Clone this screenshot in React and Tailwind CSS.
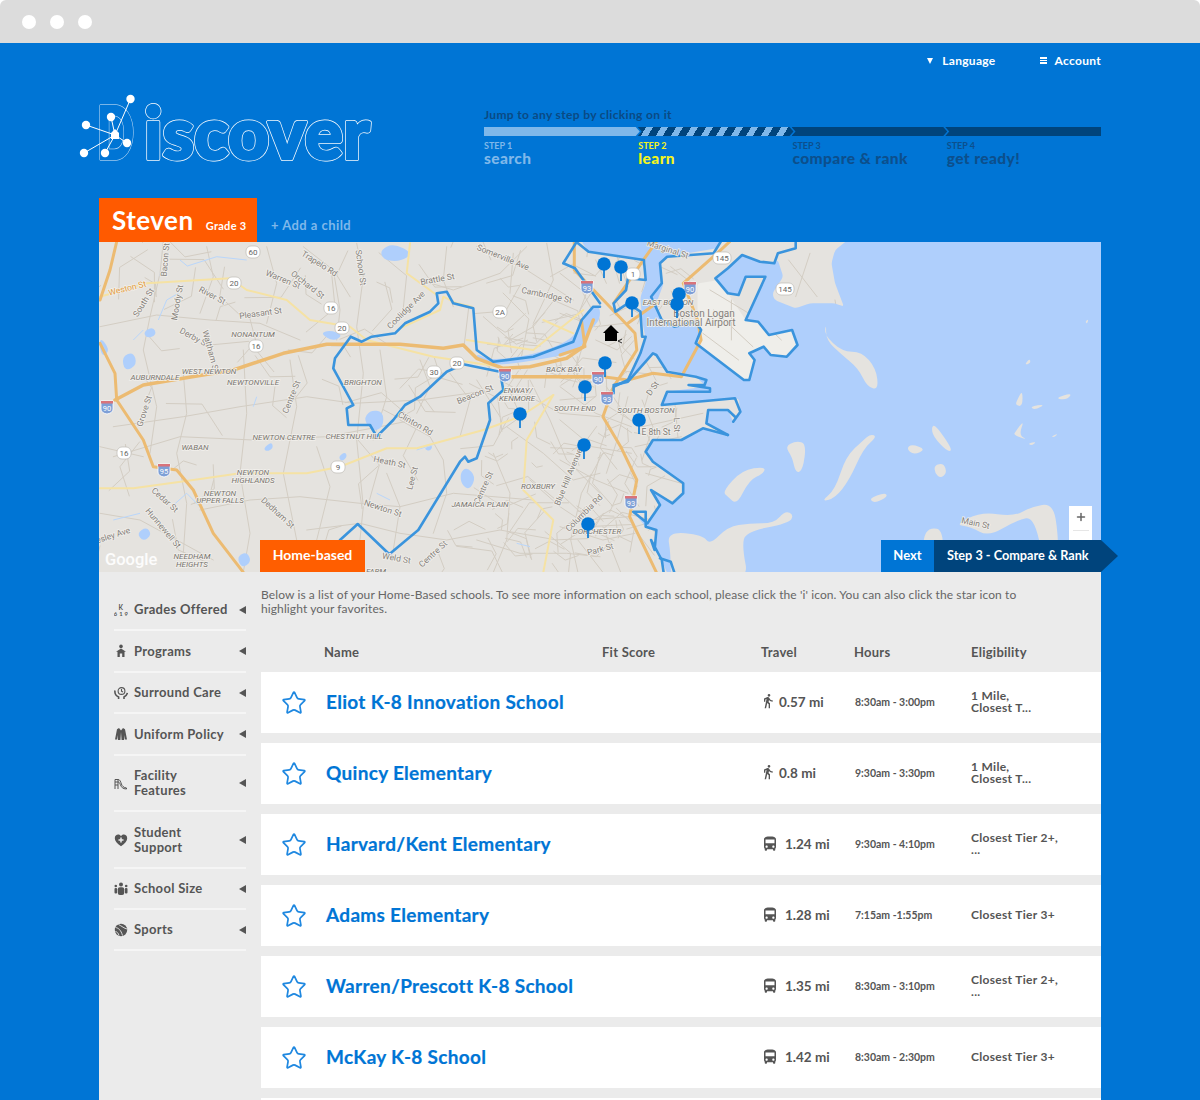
import React from 'react';
import { Star, Plus } from 'lucide-react';
import { MdDirectionsWalk, MdDirectionsBus } from 'react-icons/md';

// zoom-crop coordinates -> page coordinates, the svg viewBox is in page px
const parse = (s, ox, sx, sy) => s.trim().split(/\s+/).map((p) => { const [x, y] = p.split(',').map(Number); return [ox + x / sx, 240 + y / sy]; });
const str = (pts) => pts.map(([x, y]) => `${x.toFixed(1)},${y.toFixed(1)}`).join(' ');
const z3 = (s) => str(parse(s, 100, 3, 3));
const z4 = (s) => str(parse(s, 560, 2.8, 3));

// island outlines: quadratic through midpoints, gives the soft map blobs
const blob = (s, conv = (t) => parse(t, 560, 2.8, 3)) => {
  const p = conv(s);
  const mid = (a, b) => [(a[0] + b[0]) / 2, (a[1] + b[1]) / 2];
  const start = mid(p[p.length - 1], p[0]);
  let d = `M${start[0].toFixed(1)} ${start[1].toFixed(1)}`;
  p.forEach((pt, i) => {
    const m = mid(pt, p[(i + 1) % p.length]);
    d += `Q${pt[0].toFixed(1)} ${pt[1].toFixed(1)} ${m[0].toFixed(1)} ${m[1].toFixed(1)}`;
  });
  return d + 'Z';
};

// coast: keep the corners, only round them off a little
const rounded = (s, r = 3) => {
  const p = parse(s, 560, 2.8, 3);
  const toward = (a, b) => {
    const len = Math.hypot(b[0] - a[0], b[1] - a[1]) || 1;
    const t = Math.min(r, len / 2) / len;
    return [a[0] + (b[0] - a[0]) * t, a[1] + (b[1] - a[1]) * t];
  };
  let d = '';
  p.forEach((pt, i) => {
    const a = toward(pt, p[(i - 1 + p.length) % p.length]);
    const b = toward(pt, p[(i + 1) % p.length]);
    d += `${i ? 'L' : 'M'}${a[0].toFixed(1)} ${a[1].toFixed(1)}Q${pt[0].toFixed(1)} ${pt[1].toFixed(1)} ${b[0].toFixed(1)} ${b[1].toFixed(1)}`;
  });
  return d + 'Z';
};

const BAY = '800,5 770,30 760,70 770,130 795,200 770,190 700,190 660,205 600,180 595,160 625,110 610,60 600,70 560,65 510,45 470,85 435,115 470,160 500,165 520,110 575,110 520,240 555,245 585,285 650,270 665,315 635,350 590,345 570,320 530,340 545,360 530,420 515,420 385,310 395,270 380,245 300,255 285,240 270,190 290,130 280,70 300,50 440,25 450,5 60,5 80,35 140,42 240,62 240,130 225,170 230,240 240,300 190,420 150,440 190,430 260,340 300,390 380,410 410,440 300,455 285,495 500,475 505,510 485,545 470,510 415,510 410,550 470,585 400,565 340,600 260,600 240,635 260,665 345,730 345,760 315,790 255,750 280,795 245,850 205,815 240,860 270,870 265,930 285,960 300,1000 1520,1000 1520,0 800,0';

const ISLANDS = [
  '300,875 400,885 420,915 470,860 530,850 600,850 630,812 655,825 640,850 520,875 510,920 530,1030 310,1030 310,940',
  '745,250 740,285 790,335 845,335 885,385 892,450 860,440 835,385 790,345 745,300',
  '630,620 660,603 690,610 680,690 660,700 650,650',
  '730,785 770,750 800,650 850,600 870,582 888,590 850,625 810,720 770,775',
  '455,755 510,690 575,680 570,700 530,720 495,795 470,770',
  '1040,560 1052,555 1100,630 1085,635 1045,590',
  '970,625 985,612 1025,628 990,645',
  '1048,675 1075,670 1083,700 1065,715 1050,700',
  '865,775 910,758 918,770 880,790',
  '1280,480 1295,450 1295,500 1275,495',
  '1315,500 1360,492 1330,510',
  '1385,475 1435,458 1420,480',
  '1275,575 1300,540 1285,585 1310,600 1270,585',
  '1310,610 1335,605 1320,617',
  '1375,590 1395,580 1385,592',
  '1105,855 1180,815 1270,830 1320,800 1380,790 1395,880 1395,1010 1360,1010 1330,830 1280,840 1200,890 1150,860',
  '1015,895 1035,862 1075,870 1070,1010 1015,1010',
  '1470,245 1480,236 1476,252',
  '1300,375 1315,355 1318,370',
];

const z3p = (t) => parse(t, 100, 3, 3);
const PONDS = [
  '840,30 880,10 940,40 900,65 850,60',
  '790,540 810,510 850,515 850,560 820,575',
  '1080,700 1100,680 1128,710 1110,750 1085,735',
  '490,625 515,605 520,625 500,635',
  '715,650 735,635 742,650 725,665',
  '110,880 140,860 155,885 130,905',
  '410,950 440,935 455,965 425,985',
  '65,350 100,335 112,375 75,395',
  '130,275 160,260 170,285 140,295',
  '660,280 690,270 730,285 700,305',
  '970,625 1000,615 990,635',
  '1130,340 1170,362 1300,345 1420,298 1440,245 1470,205 1500,198 1500,240 1470,270 1440,335 1300,362 1180,378 1130,358',
  '0,290 30,330 10,350 0,330',
];
const STREAMS = [
  '240,60 262,78 350,50 440,60', '175,240 200,180 235,160', '100,300 130,270', '215,800 260,760 300,800', '40,840 120,820',
  '830,760 870,780', '950,630 1010,610', '640,900 660,960', '470,470 460,500', '1250,910 1290,920',
];

const MINOR3 = [
  '190,5 180,100 150,230 130,330 170,500 150,640', '0,260 170,225 330,240 480,250 600,300', '610,20 700,90 720,210 710,300',
  '770,10 790,110 770,260 790,400 770,600 790,800 770,997', '1130,20 1280,90 1420,180', '960,120 1060,150 1200,100 1280,20',
  '250,400 260,520 230,640 260,790 250,940', '430,330 440,520 420,700 450,880 430,997', '570,360 590,500 550,700 590,900 560,997',
  '40,560 250,530 420,500 620,470 760,490 960,480 1180,450', '40,650 240,590 460,600 680,590 840,560 940,540', '300,810 450,780 600,770 780,790 900,800 1060,760 1300,780',
  '620,870 780,850 900,880 1040,900 1200,870 1370,900', '900,540 990,590 1030,660 1040,760 1000,880', '1180,640 1230,760 1220,900 1180,997',
  '1040,20 1030,120 1060,200', '1150,230 1230,300 1300,260 1370,170', '1200,420 1290,470 1380,520 1500,530', '1290,420 1350,540 1400,660 1500,760',
  '1220,560 1330,640 1420,720 1500,700', '1290,720 1380,800 1500,880', '1130,900 1260,940 1400,940 1500,950', '860,700 900,800 880,930', '650,620 690,740 650,900',
  '0,620 130,650', '0,820 120,840 230,900 340,960', '500,20 530,130 500,250', '320,20 340,110 300,220', '840,330 860,470 820,600', '960,360 990,440 950,520',
  '1050,400 1110,480 1080,590', '1130,420 1200,530', '1340,10 1360,120 1300,250', '1240,40 1230,160', '1400,380 1440,420 1500,430',
];

const MINOR4 = [
  '0,100 60,150 100,230 30,300', '0,220 100,260 180,250', '0,440 100,520 200,560', '0,540 90,620 200,640', '0,660 100,720 190,760', '0,760 80,840 190,830', '0,860 120,900 210,880',
  '120,640 60,760 30,900 50,997', '190,470 160,600 130,700', '230,560 400,520', '210,620 340,590', '230,480 260,560 230,660', '320,470 330,590', '240,700 340,730',
  '100,300 160,330 200,290', '60,330 40,400', '130,440 180,520', '0,480 100,470', '100,60 130,130', '160,50 190,140', '310,80 370,130', '420,150 560,240 620,300',
  '430,210 540,320', '400,280 500,360', '480,180 480,300', '640,60 720,170', '700,40 660,170', '770,180 780,240', '50,900 120,997', '120,860 170,997',
];

const HIGHWAY3 = [
  '45,480 130,435 250,415 400,390 550,340 680,313 900,313 1030,325 1090,315 1130,355 1210,385 1290,380 1400,355 1450,320 1480,240',
  '1200,410 1500,410',
  '0,310 45,400 50,480 130,600 160,680 230,690 280,750 340,880 430,997',
  '50,5 30,90 0,180',
];
const HIGHWAY4 = [
  '40,5 40,90 130,190 210,280 215,330 150,440 120,530 170,620 215,720 195,830 270,997',
  '0,410 120,410 190,420 260,400 340,410 395,300 385,240 345,130 440,40 475,5',
  '0,345 70,320 60,240', '270,5 240,50 150,190', '190,250 270,190',
];
const YELLOW3 = [
  '0,170 140,130 390,115 440,150 560,180 630,240 750,260 800,300 1000,350 1200,380',
  '0,745 100,745 280,720 420,700 620,700 720,680 860,625 950,625 1150,570 1260,530 1360,465',
  '1360,465 1280,600 1270,750 1360,840 1330,997', '930,10 920,100 1010,165', '900,265 1020,210 1030,170 1070,190 1115,200', '1100,300 1300,330 1450,210', '1330,240 1420,280',
];

const BOUNDARY3 = [
  '720,900 773,852 868,943 955,870 1080,665 1095,650 1105,665 1130,655 1170,540 1165,490 1210,450 1200,395 1090,373 1040,395 960,470 915,495 880,540 830,590 810,555 745,555 740,505 760,495 700,385 705,355 752,290 785,305 815,290 885,280 915,250 990,215 1015,190 1010,160 1040,155 1060,190 1120,205 1130,330 1180,365 1300,350 1420,305 1445,240 1480,200 1500,200',
  '1430,5 1390,70 1425,85 1500,190',
];
const BOUNDARY4 = [
  '660,8 660,25 610,40 600,70 560,65 510,45 470,85 435,115 470,160 500,165 520,110 575,110 520,240 555,245 585,285 650,270 665,315 635,350 590,345 570,320 530,340 545,360 530,420 515,420 380,310 395,270 380,245 320,260 285,240 255,170 285,130 280,70 300,50 430,40 450,5',
  '45,5 80,35 235,60 240,120 190,115 185,150 150,190 155,215 190,190 225,215 230,290 240,290 225,340 190,420 150,440 150,460',
  '150,435 190,425 260,340 270,345 300,395 380,410 410,420 405,435 360,435 420,445 420,455 300,455 285,495 490,475 505,515 485,545',
  '470,585 410,550 415,510 470,510 490,530',
  '470,585 400,565 340,600 260,600 240,635 260,665 345,730 345,760 315,790 255,750 280,795 245,850 205,815 240,815 240,860 270,870 265,930 255,900 285,960 290,997',
  '280,955 310,965 320,997',
];

// seeded so the little street mesh comes out the same each load
const streetMesh = () => {
  let seed = 7;
  const rnd = () => { seed = (seed * 16807) % 2147483647; return seed / 2147483647; };
  const out = [];
  for (let i = 0; i < 190; i++) {
    const dense = i > 110;
    const cx = dense ? 490 + rnd() * 190 : 100 + rnd() * 560;
    const cy = dense ? 270 + rnd() * 290 : 242 + rnd() * 330;
    const a = rnd() * 6.28;
    const len = dense ? 6 + rnd() * 14 : 12 + rnd() * 26;
    out.push(`${cx.toFixed(1)},${cy.toFixed(1)} ${(cx + Math.cos(a) * len).toFixed(1)},${(cy + Math.sin(a) * len).toFixed(1)} ${(cx + Math.cos(a + 0.5) * len * 1.8).toFixed(1)},${(cy + Math.sin(a + 0.5) * len * 1.8).toFixed(1)}`);
  }
  return out;
};

const LABELS = [
  ['Weston St', 128, 291, -14, 'orange'], ['Bacon St', 168, 260, -85], ['South St', 146, 304, -58], ['Moody St', 180, 303, -80], ['River St', 211, 298, 28], ['Warren St', 282, 282, 22], ['Orchard St', 306, 287, 38],
  ['Trapelo Rd', 318, 266, 32], ['School St', 358, 268, 82], ['Pleasant St', 261, 316, -8], ['Derby St', 193, 340, 28], ['Waltham St', 208, 352, 75], ['Grove St', 147, 412, -72], ['Centre St', 294, 398, -68],
  ['Coolidge Ave', 408, 312, -45], ['Brattle St', 438, 282, -10], ['Somerville Ave', 502, 260, 22], ['Cambridge St', 546, 298, 12], ['Beacon St', 476, 397, -22], ['Clinton Rd', 414, 426, 30], ['Heath St', 389, 465, 12],
  ['Lee St', 415, 479, -75], ['Centre St', 486, 489, -65], ['Newton St', 382, 511, 18], ['Weld St', 396, 561, 10], ['Centre St', 435, 556, -42], ['Cedar St', 163, 502, 42], ['Hunnewell St', 161, 530, 50], ['Dedham St', 276, 515, 42],
  ['esley Ave', 114, 538, -18], ['Blue Hill Avenue', 571, 478, -68], ['Columbia Rd', 586, 515, -45], ['Park St', 601, 552, -15], ['Marginal St', 667, 252, 18], ['E 8th St', 656, 435, 0], ['L St', 674, 425, 88], ['D St', 655, 390, -55], ['Main St', 975, 526, 12],
];
const CAPS = [
  ['NONANTUM', 253, 337], ['WEST NEWTON', 209, 374], ['NEWTONVILLE', 253, 385], ['AUBURNDALE', 155, 380], ['BRIGHTON', 363, 385], ['NEWTON CENTRE', 284, 440], ['CHESTNUT HILL', 354, 439], ['WABAN', 195, 450],
  ['NEWTON', 253, 475], ['HIGHLANDS', 253, 483], ['NEWTON', 220, 496], ['UPPER FALLS', 220, 503], ['NEEDHAM', 192, 559], ['HEIGHTS', 192, 567], ['JAMAICA PLAIN', 480, 507], ['ROXBURY', 538, 489], ['BACK BAY', 564, 372],
  ['ENWAY/', 518, 393], ['KENMORE', 517, 401], ['SOUTH END', 575, 411], ['SOUTH BOSTON', 646, 413], ['DORCHESTER', 597, 534], ['EAST BOSTON', 668, 305], ['FARM', 376, 574],
];
const SHIELDS = [
  [253, 252, '60'], [331, 308, '16'], [256, 346, '16'], [124, 453, '16'], [434, 372, '30'], [338, 467, '9'], [500, 312, '2A'], [234, 283, '20'], [342, 328, '20'], [457, 363, '20'], [722, 258, '145'], [785, 289, '145'], [633, 274, '1'],
];
const INTERSTATES = [
  [107, 407, '90'], [164, 470, '95'], [505, 375, '90'], [587, 287, '93'], [690, 288, '90'], [598, 378, '90'], [607, 398, '93'], [631, 502, '93'],
];
const PINS = [[604, 264], [621, 267], [632, 303], [679, 294], [677, 304], [605, 363], [585, 387], [520, 414], [639, 420], [584, 445], [588, 524]];

function BostonMap() {
  return (
    <svg viewBox="99 242 1002 330" className="block w-[1002px] h-[330px]">
      <rect x="99" y="242" width="1002" height="330" fill="#e5e3df" />
      <path d={rounded('385,130 445,120 520,240 555,245 585,285 650,270 665,315 635,350 590,345 570,320 530,340 545,360 530,420 515,420 385,310')} fill="#efeeea" />
      <g fill="none" stroke="#d3cdc3" strokeWidth="1" strokeLinejoin="round" strokeLinecap="round">
        {streetMesh().map((p, i) => <polyline key={i} points={p} />)}
        {MINOR3.map((p, i) => <polyline key={i} points={z3(p)} />)}
        {MINOR4.map((p, i) => <polyline key={i} points={z4(p)} />)}
      </g>
      <path d={rounded(BAY)} fill="#afcffc" />
      {PONDS.map((p, i) => <path key={i} d={blob(p, z3p)} fill="#afcffc" />)}
      {STREAMS.map((p, i) => <polyline key={i} points={z3(p)} fill="none" stroke="#b9d6fb" strokeWidth="1" />)}
      {ISLANDS.map((p, i) => <path key={i} d={blob(p)} fill="#e5e3df" />)}
      <g fill="none" strokeLinejoin="round" strokeLinecap="round">
        {YELLOW3.map((p, i) => <polyline key={i} points={z3(p)} stroke="#f5e2a4" strokeWidth="2" />)}
        {HIGHWAY3.map((p, i) => <polyline key={i} points={z3(p)} stroke="#ecbb72" strokeWidth={i === 0 || i === 1 ? 3.5 : 3} />)}
        {HIGHWAY4.map((p, i) => <polyline key={i} points={z4(p)} stroke="#ecbb72" strokeWidth="3" />)}
        {BOUNDARY3.map((p, i) => <polyline key={i} points={z3(p)} stroke="#3a94dd" strokeWidth="2.6" />)}
        {BOUNDARY4.map((p, i) => <polyline key={i} points={z4(p)} stroke="#3a94dd" strokeWidth="2.6" />)}
      </g>
      {SHIELDS.map(([x, y, t], i) => (
        <g key={i}>
          <rect x={x - (t.length > 2 ? 9 : 7)} y={y - 6} width={t.length > 2 ? 18 : 14} height="12" rx="5" fill="#fff" stroke="#bdbab4" strokeWidth="0.7" />
          <text x={x} y={y + 3} textAnchor="middle" fontSize="8" fill="#666" fontFamily="Roboto, sans-serif">{t}</text>
        </g>
      ))}
      {INTERSTATES.map(([x, y, t], i) => (
        <g key={i}>
          <path d={`M${x - 6} ${y - 6}h12v8q0 4-6 5q-6-1-6-5z`} fill="#7e9fd6" stroke="#fff" strokeWidth="0.8" />
          <rect x={x - 6} y={y - 6} width="12" height="2.5" fill="#d9737a" />
          <text x={x} y={y + 4} textAnchor="middle" fontSize="7.5" fill="#fff" fontFamily="Roboto, sans-serif">{t}</text>
        </g>
      ))}
      <g fontFamily="Roboto, sans-serif" fontSize="8.5" fill="#85817b" stroke="#f2f0ec" strokeWidth="1.5" paintOrder="stroke">
        {LABELS.map(([t, x, y, r, c], i) => (
          <text key={i} x={x} y={y} textAnchor="middle" transform={`rotate(${r} ${x} ${y})`} fill={c ? '#e29b3a' : undefined}>{t}</text>
        ))}
        {CAPS.map(([t, x, y], i) => (
          <text key={i} x={x} y={y} textAnchor="middle" fontStyle="italic" fontSize="8" fill="#77736d">{t}</text>
        ))}
        <text x="704" y="317" textAnchor="middle" fontSize="10">Boston Logan</text>
        <text x="691" y="326" textAnchor="middle" fontSize="10">International Airport</text>
      </g>
      <path d="M611 325l8 8h-2v8h-12v-8h-2z" fill="#000" />
      <path d="M622 339l-4 2 4 2" fill="none" stroke="#000" strokeWidth="0.8" />
      {PINS.map(([x, y], i) => (
        <g key={i} fill="#0075d5">
          <circle cx={x} cy={y} r="6.8" />
          <rect x={x - 0.8} y={y} width="1.6" height="14" />
        </g>
      ))}
    </svg>
  );
}

function Logo() {
  const center = [115, 135];
  const nodes = [[130.5, 99], [111, 117], [86, 125], [127, 143], [105, 153], [84, 153]];
  const type = { y: 159, fontFamily: 'Lato, sans-serif', fontWeight: 900, fontSize: 72, lengthAdjust: 'spacingAndGlyphs', strokeLinejoin: 'round' };
  const d = { ...type, x: 97, textLength: 37 };
  const rest = { ...type, x: 144, textLength: 226 };
  return (
    <svg viewBox="70 90 310 80" className="block w-[310px] h-[80px]">
      {/* fat outline: a wide white stroke with a narrower blue one on top */}
      <text {...d} fill="none" stroke="#cfe4f7" strokeWidth="3.6" aria-hidden="true">D</text>
      <text {...d} fill="#0075d5" stroke="#0075d5" strokeWidth="2.4">D</text>
      <text {...rest} fill="none" stroke="#fff" strokeWidth="4" aria-hidden="true">iscover</text>
      <text {...rest} fill="#0075d5" stroke="#0075d5" strokeWidth="2.6">iscover</text>
      {nodes.map(([x, y], i) => (
        <g key={i}>
          <line x1={center[0]} y1={center[1]} x2={x} y2={y} stroke="#fff" strokeWidth="1" />
          <circle cx={x} cy={y} r="4.2" fill="#fff" />
        </g>
      ))}
      <path d="M115 129l4 4v6h-8v-6z" fill="#fff" />
    </svg>
  );
}

const ICON = 'w-[14px] h-[14px] shrink-0 text-[#555]';
const icons = {
  grades: (
    <svg viewBox="0 0 14 14" className={ICON} fill="currentColor">
      <text x="7" y="6.5" textAnchor="middle" fontSize="6.5" fontFamily="Lato, sans-serif" fontWeight="700">K</text>
      <text x="7" y="13" textAnchor="middle" fontSize="5.8" fontFamily="Lato, sans-serif" fontWeight="700">6 1 9</text>
    </svg>
  ),
  programs: <svg viewBox="0 0 14 14" className={ICON} fill="currentColor"><circle cx="7" cy="2.4" r="1.8" /><path d="M7 4.5l5 3.2h-1.5V13H8.2V9.5H5.8V13H3.5V7.7H2z" /></svg>,
  care: <svg viewBox="0 0 14 14" className={ICON} fill="none" stroke="currentColor" strokeWidth="1.1"><circle cx="7.5" cy="5" r="3.4" /><path d="M7.5 3v2.2l1.5.8" /><path d="M1 4.5c-.6 3.6 1.8 5.6 3.6 6.4V13M13.4 7c-.4 2-1.8 3.2-3.4 4v2" strokeWidth="1.6" /></svg>,
  uniform: <svg viewBox="0 0 14 14" className={ICON} fill="currentColor"><path d="M5 1l2 2.4L9 1l2 1.2 2 10.3h-2.2L10 8v5H7.6L7 5 6.4 13H4V8l-.8 4.5H1L3 2.2z" /></svg>,
  facility: <svg viewBox="0 0 14 14" className={ICON} fill="none" stroke="currentColor" strokeWidth="1"><path d="M1 13V3.5h3V13M1 6h3M1 9h3M4 3.5c2 0 2.5 2 3.4 4.5.7 2 1.9 3.5 5.1 4v1c-4 0-5.2-2-6.2-4.5C5.7 7 5.3 6 4 6" /></svg>,
  support: <svg viewBox="0 0 14 14" className={ICON}><path d="M7 13.2C3 10.5.8 8 .8 5.2.8 3 2.4 1.6 4.2 1.6c1.2 0 2.2.6 2.8 1.6.6-1 1.6-1.6 2.8-1.6 1.8 0 3.4 1.4 3.4 3.6C13.2 8 11 10.5 7 13.2z" fill="currentColor" /><path d="M7 4.5v5M4.5 7h5" stroke="#ebebeb" strokeWidth="1.5" /></svg>,
  size: <svg viewBox="0 0 14 14" className={ICON} fill="currentColor"><circle cx="7" cy="2.5" r="2" /><circle cx="1.8" cy="4" r="1.3" /><circle cx="12.2" cy="4" r="1.3" /><rect x="3.8" y="5.2" width="6.4" height="7.8" rx="2" /><rect x=".5" y="6" width="2.6" height="5.5" rx="1" /><rect x="10.9" y="6" width="2.6" height="5.5" rx="1" /></svg>,
  sports: <svg viewBox="0 0 14 14" className={ICON}><circle cx="7" cy="7" r="6.2" fill="currentColor" /><path d="M1.5 4.5c3 .5 5.5 2.5 7 8M4.5 1.500c3 1.500 6 4 8.500 4.500M1.500 8.500c1.500.3 2.800 1.500 3.500 4" fill="none" stroke="#ebebeb" strokeWidth=".9" /></svg>,
};

const FILTERS = [
  { label: 'Grades Offered', icon: 'grades', h: 'h-[41px]' },
  { label: 'Programs', icon: 'programs', h: 'h-[42px]' },
  { label: 'Surround Care', icon: 'care', h: 'h-[41px]' },
  { label: 'Uniform Policy', icon: 'uniform', h: 'h-[42px]' },
  { label: 'Facility\nFeatures', icon: 'facility', h: 'h-[56px]' },
  { label: 'Student\nSupport', icon: 'support', h: 'h-[57px]' },
  { label: 'School Size', icon: 'size', h: 'h-[41px]' },
  { label: 'Sports', icon: 'sports', h: 'h-[41px]' },
];

const SCHOOLS = [
  { name: 'Eliot K-8 Innovation School', mode: 'walk', dist: '0.57 mi', hours: '8:30am - 3:00pm', elig: '1 Mile,\nClosest T...' },
  { name: 'Quincy Elementary', mode: 'walk', dist: '0.8 mi', hours: '9:30am - 3:30pm', elig: '1 Mile,\nClosest T...' },
  { name: 'Harvard/Kent Elementary', mode: 'bus', dist: '1.24 mi', hours: '9:30am - 4:10pm', elig: 'Closest Tier 2+,\n...' },
  { name: 'Adams Elementary', mode: 'bus', dist: '1.28 mi', hours: '7:15am -1:55pm', elig: 'Closest Tier 3+' },
  { name: 'Warren/Prescott K-8 School', mode: 'bus', dist: '1.35 mi', hours: '8:30am - 3:10pm', elig: 'Closest Tier 2+,\n...' },
  { name: 'McKay K-8 School', mode: 'bus', dist: '1.42 mi', hours: '8:30am - 2:30pm', elig: 'Closest Tier 3+' },
];

const Arrow = () => <span className="ml-auto w-0 h-0 border-y-[4px] border-y-transparent border-r-[7px] border-r-[#555]" />;

const SEG = '[clip-path:polygon(0_0,calc(100%-4px)_0,100%_50%,calc(100%-4px)_100%,0_100%,4px_50%)]';

function Step({ n, label, color }) {
  return (
    <div className={color}>
      <div className="text-[9px] leading-[10px] font-bold">STEP {n}</div>
      <div className="text-[15.5px] leading-[15px] font-black tracking-[0.4px]">{label}</div>
    </div>
  );
}

export default function App() {
  return (
    <div className="h-[1100px] overflow-hidden bg-white font-['Lato',sans-serif]">
      {/* Browser chrome */}
      <div className="h-[43px] bg-[#dcdcdc] rounded-t-[6px] flex items-center gap-[14px] pl-[22px]">
        <span className="w-[14px] h-[14px] rounded-full bg-white" />
        <span className="w-[14px] h-[14px] rounded-full bg-white" />
        <span className="w-[14px] h-[14px] rounded-full bg-white" />
      </div>

      <div className="h-[1057px] bg-[#0075d5]">
        {/* Top links */}
        <div className="h-[37px] pb-[2px] pr-[99px] flex items-center justify-end gap-[44px] text-[12px] tracking-[0.3px] font-bold text-white">
          <span className="flex items-center gap-[9px]">
            <span className="w-0 h-0 border-x-[3px] border-x-transparent border-t-[6px] border-t-white" />
            Language
          </span>
          <span className="flex items-center gap-[8px]">
            <span className="flex flex-col gap-[1px]">
              <span className="block w-[7px] h-[1.5px] bg-white" />
              <span className="block w-[7px] h-[1.5px] bg-white" />
              <span className="block w-[7px] h-[1.5px] bg-white" />
            </span>
            Account
          </span>
        </div>

        {/* Logo + stepper */}
        <div className="h-[118px] flex pl-[70px] pr-[99px]">
          <div className="w-[414px] pt-[10px]"><Logo /></div>
          <div className="flex-1 pt-[27px]">
            <p className="text-[12px] leading-[16px] font-bold tracking-[0.35px] text-[#0a4a84]">Jump to any step by clicking on it</p>
            <div className="mt-[4px] flex h-[9px]">
              <div className="flex-1 bg-[#7fb8ea] [clip-path:polygon(0_0,calc(100%-4px)_0,100%_50%,calc(100%-4px)_100%,0_100%)]" />
              <div className={`flex-1 -ml-[2px] ${SEG} bg-[repeating-linear-gradient(120deg,#00447c_0,#00447c_7px,#7fb8ea_7px,#7fb8ea_13px)]`} />
              <div className={`flex-1 -ml-[2px] ${SEG} bg-[#00447c]`} />
              <div className="flex-1 -ml-[2px] bg-[#00447c] [clip-path:polygon(0_0,100%_0,100%_100%,0_100%,4px_50%)]" />
            </div>
            <div className="grid grid-cols-4 mt-[5px]">
              <Step n={1} label="search" color="text-[#7fb8ea]" />
              <Step n={2} label="learn" color="text-[#f4f51d]" />
              <Step n={3} label="compare & rank" color="text-[#0c4f8c]" />
              <Step n={4} label="get ready!" color="text-[#0c4f8c]" />
            </div>
          </div>
        </div>

        {/* Child tabs */}
        <div className="h-[44px] mx-[99px] flex items-end">
          <div className="w-[158px] h-[44px] bg-[#ff5a00] pl-[13px] flex items-baseline text-white font-bold">
            <span className="text-[26px] leading-[44px] tracking-[0.5px]">Steven</span>
            <span className="text-[11px] ml-[12px] tracking-[0.3px]">Grade 3</span>
          </div>
          <span className="ml-[14px] mb-[7px] text-[13px] tracking-[0.45px] font-bold text-[#7fb8ea]">+ Add a child</span>
        </div>

        {/* Map */}
        <div className="relative w-[1002px] h-[330px] ml-[99px]">
          <BostonMap />
          <span className="absolute left-[6px] bottom-[-1px] text-[16.5px] font-['Roboto',sans-serif] font-medium text-white/90">Google</span>
          <div className="absolute left-[161px] bottom-0 w-[105px] h-[32px] pb-[3px] bg-[#ff5e00] flex items-center justify-center text-[14px] font-bold text-white">Home-based</div>
          <div className="absolute right-[9px] bottom-[32px] w-[23px] h-[34px] bg-white flex flex-col items-center pt-[5px]">
            <Plus size={12} strokeWidth={3} className="text-[#666]" />
            <div className="mt-[7px] w-[16px] h-px bg-[#e6e6e6]" />
          </div>
          <div className="absolute left-[782px] bottom-0 h-[32px] flex text-[12.7px] font-bold text-white">
            <div className="w-[53px] bg-[#0075d5] flex items-center justify-center text-[13px]">Next</div>
            <div className="w-[184px] bg-[#00447c] pl-[13px] flex items-center [clip-path:polygon(0_0,calc(100%-17px)_0,100%_50%,calc(100%-17px)_100%,0_100%)]">Step 3 - Compare &amp; Rank</div>
          </div>
        </div>

        {/* Results */}
        <div className="mx-[99px] bg-[#ebebeb] h-[528px] flex">
          <aside className="w-[162px] shrink-0 pt-[18px] pl-[15px] pr-[15px]">
            {FILTERS.map((f) => (
              <div key={f.label} className={`${f.h} border-b-2 border-[#f5f5f5] flex items-center gap-[6px] text-[13px] leading-[15px] tracking-[0.3px] font-bold text-[#555]`}>
                {icons[f.icon]}
                <span className="whitespace-pre-line">{f.label}</span>
                <Arrow />
              </div>
            ))}
          </aside>

          <main className="flex-1">
            <p className="pt-[16px] h-[64px] text-[12px] leading-[14px] tracking-[0.1px] text-[#666]">
              Below is a list of your Home-Based schools. To see more information on each school, please click the 'i' icon. You can also click the star icon to<br />highlight your favorites.
            </p>
            <div className="h-[36px] pb-[2px] grid grid-cols-[63px_278px_159px_93px_117px_1fr] items-center text-[13px] tracking-[0.25px] font-bold text-[#555]">
              <span />
              <span>Name</span>
              <span>Fit Score</span>
              <span>Travel</span>
              <span>Hours</span>
              <span>Eligibility</span>
            </div>
            <div className="flex flex-col gap-[10px]">
              {SCHOOLS.map((s) => (
                <div key={s.name} className="h-[61px] bg-white grid grid-cols-[65px_436px_93px_116px_1fr] items-center text-[#555]">
                  <span className="pl-[20px]"><Star size={26} strokeWidth={1.6} className="text-[#1f88e0]" /></span>
                  <span className="text-[19px] tracking-[0.3px] font-bold text-[#0075d5] [-webkit-text-stroke:0.2px_#0075d5]">{s.name}</span>
                  <span className="flex items-center text-[13.5px] font-bold">
                    {s.mode === 'walk'
                      ? <MdDirectionsWalk size={16} className="mr-[3px] -mt-[3px] -ml-[2px]" />
                      : <MdDirectionsBus size={18} className="mr-[6px] -mt-[2px] -ml-[1px]" />}
                    {s.dist}
                  </span>
                  <span className="text-[10.5px] font-bold">{s.hours}</span>
                  <span className="pb-[2px] text-[12px] leading-[12px] tracking-[0.3px] font-bold whitespace-pre-line">{s.elig}</span>
                </div>
              ))}
              <div className="h-[61px] bg-white" />
            </div>
          </main>
        </div>
      </div>
    </div>
  );
}
